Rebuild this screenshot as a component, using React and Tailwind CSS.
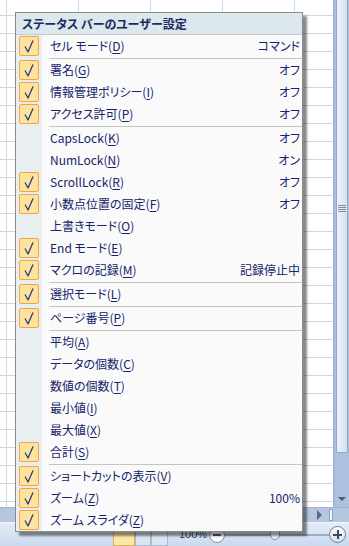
import React from 'react';

const items = [
  { label: 'セル モード', k: 'D', value: 'コマンド', checked: true },
  'sep',
  { label: '署名', k: 'G', value: 'オフ', checked: true },
  { label: '情報管理ポリシー', k: 'I', value: 'オフ', checked: true },
  { label: 'アクセス許可', k: 'P', value: 'オフ', checked: true },
  'sep',
  { label: 'CapsLock', k: 'K', value: 'オフ' },
  { label: 'NumLock', k: 'N', value: 'オン' },
  { label: 'ScrollLock', k: 'R', value: 'オフ', checked: true },
  { label: '小数点位置の固定', k: 'F', value: 'オフ', checked: true },
  { label: '上書きモード', k: 'O' },
  { label: 'End モード', k: 'E', checked: true },
  { label: 'マクロの記録', k: 'M', value: '記録停止中', checked: true },
  'sep',
  { label: '選択モード', k: 'L', checked: true },
  'sep',
  { label: 'ページ番号', k: 'P', checked: true },
  'sep',
  { label: '平均', k: 'A' },
  { label: 'データの個数', k: 'C' },
  { label: '数値の個数', k: 'T' },
  { label: '最小値', k: 'I' },
  { label: '最大値', k: 'X' },
  { label: '合計', k: 'S', checked: true },
  'sep',
  { label: 'ショートカットの表示', k: 'V', checked: true },
  { label: 'ズーム', k: 'Z', value: '100%', checked: true },
  { label: 'ズーム スライダ', k: 'Z', checked: true },
];

const Check = () => (
  <div className="w-[20px] h-[20px] border border-[#f1a345] bg-[#fee39c] rounded-[2px] relative">
    <svg width="18" height="18" viewBox="0 0 18 18" className="absolute left-0 top-0">
      <path d="M5 9.5 L8 15 L13 3.5" fill="none" stroke="#2c3a86" strokeWidth="1.3" strokeLinejoin="round" />
    </svg>
  </div>
);

const Sheet = () => {
  const rows = Array.from({ length: 29 });
  return (
    <div className="flex-1 overflow-hidden bg-white">
      {rows.map((_, r) => (
        <div key={r} className={`flex ${r === 0 ? 'h-[16px]' : 'h-[18px]'}`}>
          <div className="w-[7px] border-r border-b border-[#d0d7e5]" />
          <div className="w-[72px] border-r border-b border-[#d0d7e5]" />
          <div className="w-[72px] border-r border-b border-[#d0d7e5]" />
          <div className="w-[72px] border-r border-b border-[#d0d7e5]" />
          <div className="w-[72px] border-r border-b border-[#d0d7e5]" />
          <div className="flex-1 border-b border-[#d0d7e5]" />
        </div>
      ))}
    </div>
  );
};

const VScroll = () => (
  <div className="w-[16px] flex flex-col border-l-2 border-[#9fb6dc] bg-[#aec2df]">
    <div className="h-[453px] mx-[1px] border border-t-0 border-[#8ea6cf] rounded-b-[2px] bg-gradient-to-r from-[#eef3fa] to-[#d4dff0] flex flex-col items-center justify-center">
      <div className="flex flex-col gap-[1px] mt-[-36px]">
        <div className="w-[8px] h-[1px] bg-[#7d8ca8]" />
        <div className="w-[8px] h-[1px] bg-[#7d8ca8]" />
        <div className="w-[8px] h-[1px] bg-[#7d8ca8]" />
        <div className="w-[8px] h-[1px] bg-[#7d8ca8]" />
      </div>
    </div>
    <div className="flex-1" />
    <div className="h-[17px] flex items-center justify-center">
      <div className="w-0 h-0 border-l-[4px] border-r-[4px] border-t-[4px] border-l-transparent border-r-transparent border-t-[#4c5e80]" />
    </div>
  </div>
);

const Menu = () => (
  <div className="absolute left-[15px] top-[12px] w-[288px] border border-[#8a8a8a] bg-[#fafafa] shadow-[4px_4px_2px_rgba(0,0,0,0.45)] [font-family:'Noto_Sans_CJK_JP',sans-serif] [font-feature-settings:'palt'] text-[12px] leading-none text-[#15246b]">
    <div className="h-[22px] bg-[#dde7ee] border-b border-[#c6c9cc] flex items-center pl-[6px] font-bold text-[#1a2c5c]">
      ステータス バーのユーザー設定
    </div>
    {items.map((it, i) =>
      it === 'sep' ? (
        <div key={i} className="h-[2px] flex">
          <div className="w-[26px] bg-[#e9eef1]" />
          <div className="flex-1 ml-[7px] mt-[1px] h-[1px] bg-[#c5c5c5]" />
        </div>
      ) : (
        <div key={i} className="h-[22px] flex items-center">
          <div className="w-[26px] h-full bg-[#e9eef1] flex items-center pl-[3px]">
            {it.checked && <Check />}
          </div>
          <div className="flex-1 pl-[8px] whitespace-nowrap">
            {it.label}(<span className="underline underline-offset-[2px]">{it.k}</span>)
          </div>
          {it.value && <div className="pr-[2px] whitespace-nowrap">{it.value}</div>}
        </div>
      )
    )}
  </div>
);

const StatusBar = () => (
  <div className="h-[24px] bg-gradient-to-b from-[#e4edf8] to-[#c9daef] border-t border-[#f2f6fb] flex items-center justify-end pr-[3px] [font-family:'Liberation_Sans',sans-serif] text-[11px] text-[#33435f]">
    <div className="flex h-full items-end">
      <div className="w-[22px] h-[19px] bg-[#fde7a6] border border-[#d9b25a]" />
      <div className="w-[16px] h-[19px] bg-[#dbe5f2] border border-[#a9bad3]" />
      <div className="w-[17px] h-[19px] bg-[#dbe5f2] border border-[#a9bad3]" />
    </div>
    <div className="ml-[11px] w-[30px]">100%</div>
    <div className="w-[16px] h-[16px] rounded-full border border-[#7f8fa8] bg-white flex items-center justify-center">
      <div className="w-[8px] h-[2px] bg-[#4a5a74]" />
    </div>
    <div className="w-[104px] h-[2px] bg-[#9aabc4] relative">
      <div className="absolute left-[45px] top-[-6px] w-[10px] h-[12px] border border-[#7f8fa8] bg-[#eef3fa] rounded-b-full" />
    </div>
    <div className="w-[17px] h-[17px] rounded-full border border-[#6f7f98] bg-gradient-to-b from-white to-[#d5dfee] flex items-center justify-center relative">
      <div className="w-[9px] h-[2px] bg-[#3c4a62]" />
      <div className="absolute w-[2px] h-[9px] bg-[#3c4a62]" />
    </div>
  </div>
);

export default function App() {
  return (
    <div className="w-[349px] h-[546px] relative overflow-hidden bg-white">
      <div className="flex flex-col h-full">
        <div className="flex h-[507px]">
          <Sheet />
          <VScroll />
        </div>
        <div className="h-[15px] bg-[#b4c6e0] flex items-center justify-end pr-[16px] border-t border-[#a0b4d2]">
          <div className="w-0 h-0 border-t-[5px] border-b-[5px] border-l-[5px] border-t-transparent border-b-transparent border-l-[#55678a] mr-[7px]" />
          <div className="w-[4px] h-[12px] bg-[#f2f6fb] border border-[#8ea6cf]" />
        </div>
        <StatusBar />
      </div>
      <Menu />
    </div>
  );
}
